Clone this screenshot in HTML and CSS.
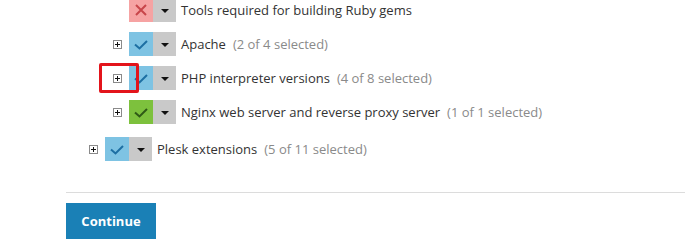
FILE: index.html
```html
<!DOCTYPE html>
<html>
<head>
<meta charset="utf-8">
<link rel="stylesheet" href="styles.css">
</head>
<body>
<div class="page">
  <div class="tree">
    <div class="group nested">
      <div class="row">
        <span class="toggle empty"></span>
        <span class="state red"><svg width="24" height="24" viewBox="0 0 24 24"><path d="M7 7 L17 17 M17 7 L7 17" stroke="#c8464a" stroke-width="2" fill="none"/></svg></span>
        <span class="drop"><span class="caret"></span></span>
        <span class="label">Tools required for building Ruby gems</span>
      </div>
      <div class="row">
        <span class="toggle"><svg width="9" height="9" viewBox="0 0 9 9"><rect x="0.5" y="0.5" width="8" height="8" fill="#fff" stroke="#8a8a8a"/><path d="M2 4.5 H7 M4.5 2 V7" stroke="#111" stroke-width="1"/></svg></span>
        <span class="state blue"><svg width="24" height="24" viewBox="0 0 24 24"><path d="M6 12.5 L10.5 16.5 L18 9" stroke="#1d6fa3" stroke-width="2" fill="none"/></svg></span>
        <span class="drop"><span class="caret"></span></span>
        <span class="label">Apache</span><span class="count">(2 of 4 selected)</span>
      </div>
      <div class="row">
        <span class="toggle"><svg width="9" height="9" viewBox="0 0 9 9"><rect x="0.5" y="0.5" width="8" height="8" fill="#fff" stroke="#8a8a8a"/><path d="M2 4.5 H7 M4.5 2 V7" stroke="#111" stroke-width="1"/></svg></span>
        <span class="highlight"></span>
        <span class="state blue"><svg width="24" height="24" viewBox="0 0 24 24"><path d="M6 12.5 L10.5 16.5 L18 9" stroke="#1d6fa3" stroke-width="2" fill="none"/></svg></span>
        <span class="drop"><span class="caret"></span></span>
        <span class="label">PHP interpreter versions</span><span class="count">(4 of 8 selected)</span>
      </div>
      <div class="row">
        <span class="toggle"><svg width="9" height="9" viewBox="0 0 9 9"><rect x="0.5" y="0.5" width="8" height="8" fill="#fff" stroke="#8a8a8a"/><path d="M2 4.5 H7 M4.5 2 V7" stroke="#111" stroke-width="1"/></svg></span>
        <span class="state green"><svg width="24" height="24" viewBox="0 0 24 24"><path d="M6 12.5 L10.5 16.5 L18 9" stroke="#2f5a16" stroke-width="2" fill="none"/></svg></span>
        <span class="drop"><span class="caret"></span></span>
        <span class="label">Nginx web server and reverse proxy server</span><span class="count">(1 of 1 selected)</span>
      </div>
    </div>
    <div class="group top">
      <div class="row">
        <span class="toggle"><svg width="9" height="9" viewBox="0 0 9 9"><rect x="0.5" y="0.5" width="8" height="8" fill="#fff" stroke="#8a8a8a"/><path d="M2 4.5 H7 M4.5 2 V7" stroke="#111" stroke-width="1"/></svg></span>
        <span class="state blue"><svg width="24" height="24" viewBox="0 0 24 24"><path d="M6 12.5 L10.5 16.5 L18 9" stroke="#1d6fa3" stroke-width="2" fill="none"/></svg></span>
        <span class="drop"><span class="caret"></span></span>
        <span class="label">Plesk extensions</span><span class="count">(5 of 11 selected)</span>
      </div>
    </div>
  </div>
  <div class="divider"></div>
  <button class="btn">Continue</button>
</div>
</body>
</html>
```
FILE: styles.css
```css
html, body {
  margin: 0;
  padding: 0;
  background: #fff;
}
body {
  font-family: "Open Sans", "Liberation Sans", sans-serif;
  font-size: 13px;
  color: #333;
  overflow: hidden;
}
.page {
  padding-left: 66px;
  padding-top: 1px;
}
.tree {
  margin-top: -3px;
  padding-left: 23px;
}
.group {
  display: flex;
  flex-direction: column;
  gap: 10px;
}
.group.nested {
  padding-left: 24px;
  margin-bottom: 13px;
}
.row {
  position: relative;
  display: flex;
  align-items: center;
  height: 24px;
  white-space: nowrap;
}
.toggle {
  width: 9px;
  height: 9px;
  margin-right: 7px;
  display: flex;
}
.state {
  width: 24px;
  height: 24px;
  display: flex;
}
.state.red { background: #f6a3a3; }
.state.blue { background: #7ec3e3; }
.state.green { background: #7dc13d; }
.drop {
  width: 23px;
  height: 24px;
  background: #c9c9c9;
  display: flex;
  align-items: center;
  justify-content: center;
}
.caret {
  width: 0;
  height: 0;
  border-left: 4px solid transparent;
  border-right: 4px solid transparent;
  border-top: 4px solid #111;
  margin-top: 1px;
}
.label {
  margin-left: 5px;
  color: #333;
}
.count {
  margin-left: 7px;
  color: #8a8a8a;
}
.highlight {
  position: absolute;
  left: -14px;
  top: -3px;
  width: 34px;
  height: 24px;
  border: 3px solid #e3141b;
  border-radius: 2px;
}
.divider {
  height: 1px;
  background: #dcdcdc;
  margin-top: 31px;
  margin-bottom: 10px;
}
.btn {
  display: block;
  width: 90px;
  height: 36px;
  border: none;
  background: #1a80b6;
  color: #fff;
  font-family: "Open Sans", "Liberation Sans", sans-serif;
  font-weight: bold;
  font-size: 13px;
  padding: 0;
}
```
